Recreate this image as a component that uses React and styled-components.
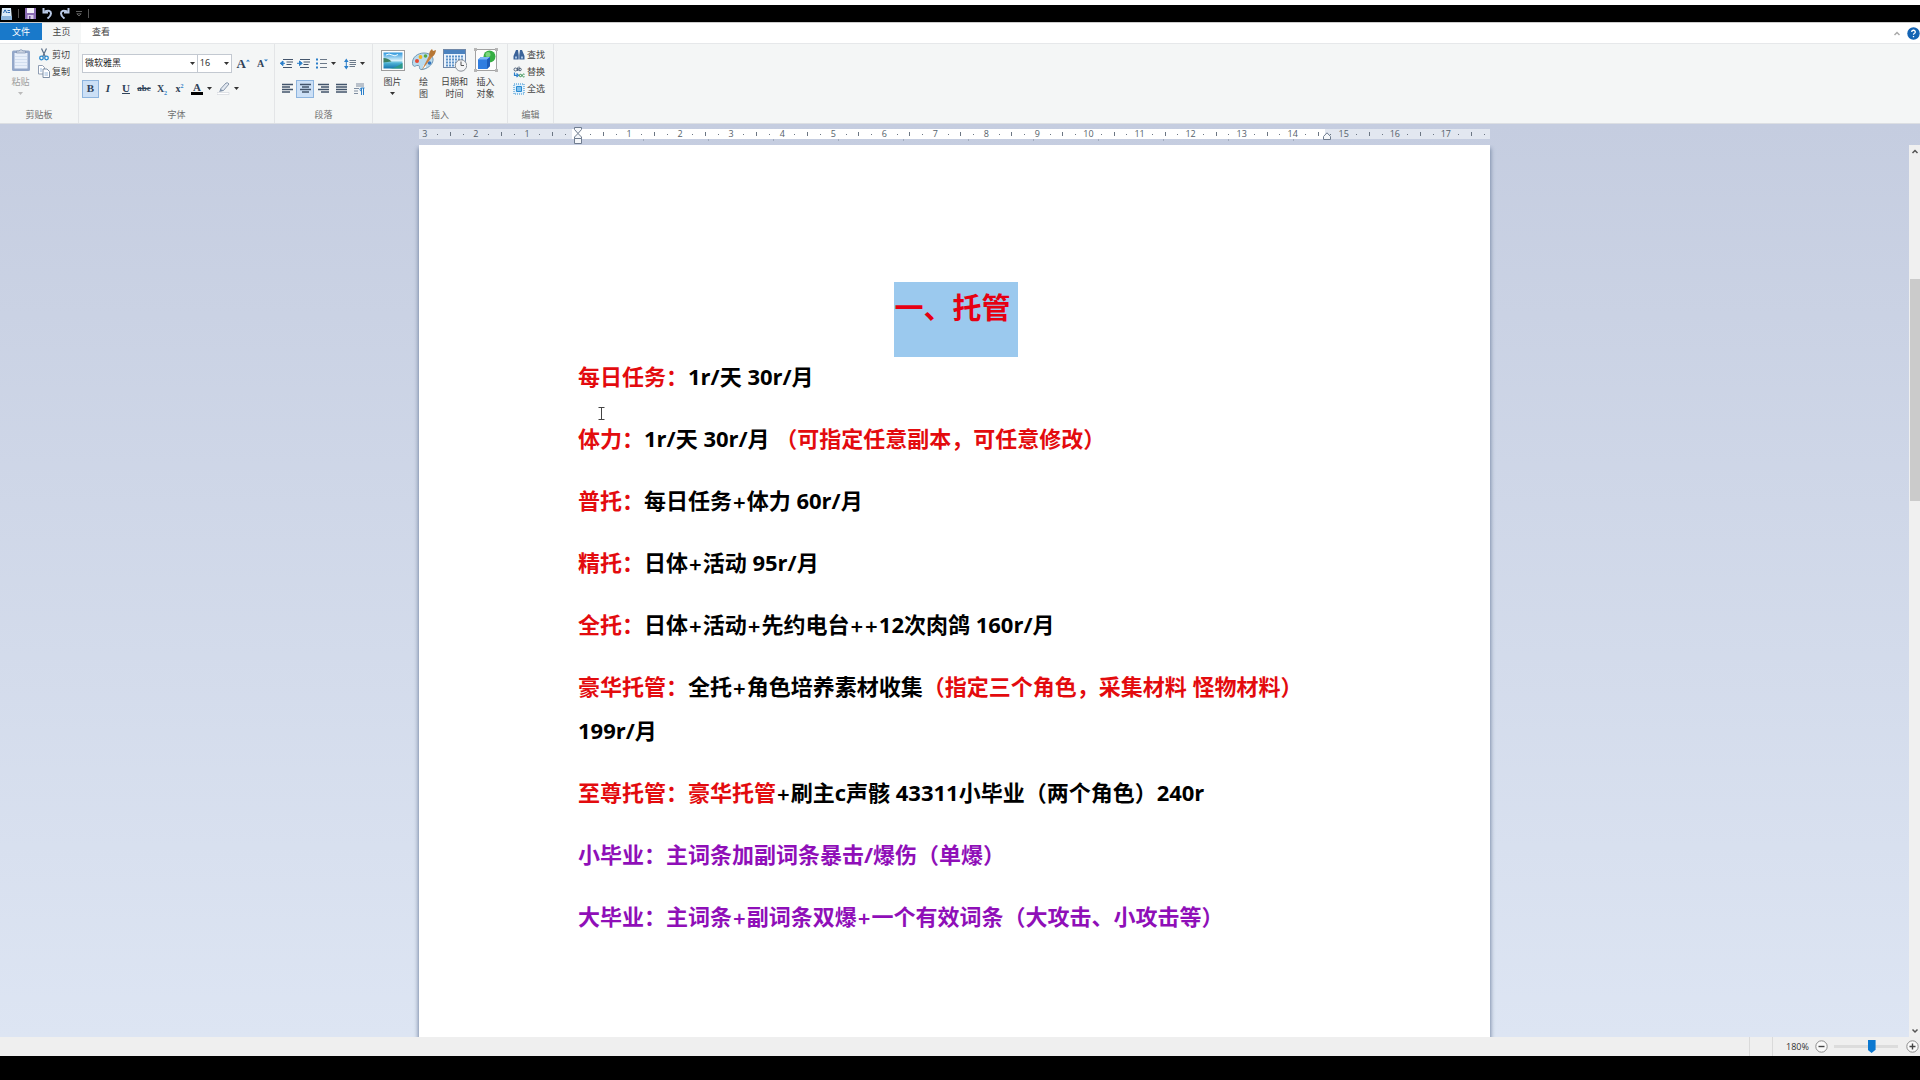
import React, { useState } from "react";
import styled, { createGlobalStyle } from "styled-components";

const GlobalStyle = createGlobalStyle`
  * {
    box-sizing: border-box;
  }

  body {
    margin: 0;
    background: #000;
    font-family: "Open Sans", "Noto Sans CJK SC", sans-serif;
    font-size: 9px;
    color: #444;
  }

  button, select, input {
    font: inherit;
    color: inherit;
    margin: 0;
  }
`;

// Window frame
const Window = styled.div`
  display: flex;
  flex-direction: column;
  height: 100vh;
  border-top: 5px solid #fff;
  padding-bottom: 24px;
  overflow: hidden;
`;

const TitleBar = styled.header`
  display: flex;
  align-items: center;
  gap: 6px;
  height: 17px;
  padding-left: 1px;
  background: #000;
`;

const TitleDivider = styled.span`
  width: 1px;
  height: 9px;
  background: #555;
`;

const IconButton = styled.button`
  display: flex;
  align-items: center;
  justify-content: center;
  padding: 0;
  border: none;
  background: none;
  width: ${(props) => props.$width || 11}px;
  height: 16px;
`;

const TabBar = styled.nav`
  display: flex;
  align-items: stretch;
  height: 21px;
  border-top: 1px solid #ccc;
  background: #fff;
`;

const Tab = styled.button`
  width: ${(props) => props.$width}px;
  height: ${(props) => (props.$file ? 17 : 20)}px;
  padding: 0 0 ${(props) => (props.$file ? 0 : 3)}px;
  border: none;
  background: ${(props) => (props.$file ? "#1979ca" : props.$active ? "#f4f6f6" : "none")};
  color: ${(props) => (props.$file ? "#fff" : "#444")};
  line-height: 17px;
`;

const TabTools = styled.div`
  display: flex;
  align-items: center;
  gap: 5px;
  margin-left: auto;
`;

// Ribbon
const Ribbon = styled.section`
  display: flex;
  height: 81px;
  border-top: 1px solid #e6e8ea;
  border-bottom: 1px solid #dcdfe3;
  background: #f4f6f6;
`;

const Group = styled.div`
  display: flex;
  flex-direction: column;
  width: ${(props) => props.$width}px;
  padding: 2px 3px 0;
  border-right: 1px solid #e3e5e7;
`;

const GroupBody = styled.div`
  display: flex;
  flex-direction: ${(props) => (props.$rows ? "column" : "row")};
  height: 62px;
  padding-left: ${(props) => props.$indent || 0}px;
`;

const GroupLabel = styled.div`
  line-height: 13px;
  text-align: center;
  color: #707070;
`;

const BigButton = styled.button`
  display: flex;
  flex-direction: column;
  align-items: center;
  width: ${(props) => props.$width || 31}px;
  padding: 2px 0 0;
  border: none;
  background: none;
  line-height: 12px;
  white-space: nowrap;
  color: ${(props) => (props.$faded ? "#a0a0a0" : "#444")};

  svg:first-child {
    margin-bottom: 4px;
  }

  svg:last-child {
    margin-top: 4px;
  }
`;

const SmallStack = styled.div`
  display: flex;
  flex-direction: column;
`;

const SmallButton = styled.button`
  display: flex;
  align-items: center;
  gap: 2px;
  height: 17px;
  padding: 0;
  border: none;
  background: none;
  color: #444;
`;

const ToolRow = styled.div`
  display: flex;
  align-items: center;
  height: 19px;
  margin-top: ${(props) => props.$top}px;
`;

const Tool = styled.button`
  display: flex;
  align-items: center;
  justify-content: center;
  gap: ${(props) => (props.$tight ? 0 : 4)}px;
  width: ${(props) => props.$width || 17}px;
  height: 18px;
  padding: 0;
  border: 1px solid ${(props) => (props.$on ? "#8db4de" : "transparent")};
  background: ${(props) => (props.$on ? "#cce0f6" : "none")};
`;

const SelectBox = styled.label`
  display: grid;
  align-items: center;
  width: ${(props) => props.$width}px;
  height: 19px;
  border: 1px solid #c3c9d1;
  background: #fff;

  & + & {
    border-left: none;
  }

  select, svg {
    grid-area: 1 / 1;
  }

  select {
    width: 100%;
    height: 17px;
    padding: 0 2px 2px;
    border: none;
    background: none;
    appearance: none;
    color: #222;
  }

  svg {
    justify-self: end;
    margin-right: 2px;
    pointer-events: none;
  }
`;

// Document area
const Workspace = styled.main`
  display: flex;
  flex-direction: column;
  flex: 1;
  min-height: 0;
  background: linear-gradient(#c5cde0, #dde5f3);
`;

const RulerArea = styled.div`
  height: 21px;
  padding: 5px 11px 0 0;
`;

const Ruler = styled.div`
  display: grid;
  grid-template-columns: repeat(84, minmax(0, 1fr));
  width: 1072px;
  max-width: 100%;
  height: 10px;
  margin: 0 auto;
`;

const RulerCell = styled.div`
  position: relative;
  display: flex;
  align-items: center;
  justify-content: center;
  background: ${(props) => (props.$outside ? "#e2e7f0" : "#fff")};
  color: #555f6b;
  line-height: 10px;
`;

const RulerMark = styled.i`
  width: 1px;
  height: ${(props) => (props.$tall ? 4 : 1)}px;
  background: #6c7683;
`;

const IndentMarker = styled.svg`
  position: absolute;
  top: ${(props) => props.$top}px;
  left: ${(props) => props.$left}px;
`;

const TabStops = styled.div`
  display: grid;
  grid-template-columns: repeat(11, 65px);
  width: 1072px;
  max-width: 100%;
  height: 2px;
  margin: 0 auto;
  padding-left: 160px;
  overflow: hidden;

  i {
    border-right: 1px solid #a3adbf;
  }
`;

const Scroller = styled.div`
  display: flex;
  flex: 1;
  min-height: 0;
`;

const Desk = styled.div`
  flex: 1;
  display: flex;
  justify-content: center;
  overflow: hidden;
`;

const Page = styled.article`
  position: relative;
  width: 1071px;
  max-width: 100%;
  padding: 137px 163px 0 159px;
  background: #fff;
  box-shadow: 0 4px 4px 1px #7d8ea9;
  font-size: 22px;
  font-weight: 700;
  line-height: 44px;
  color: #000;
`;

const Heading = styled.h1`
  height: 72px;
  margin: 0;
  font-size: 29px;
  text-align: center;
  color: #e60012;
`;

const Selection = styled.span`
  display: inline-block;
  height: 75px;
  padding-right: 7px;
  margin-right: -7px;
  background: #9bc9ee;
  line-height: 52px;
  vertical-align: top;
`;

const Paragraph = styled.p`
  margin: 0 0 18px;
`;

const Ink = styled.span`
  color: ${(props) => props.$color};
`;

const Plus = styled.span`
  font-family: Inter, sans-serif;
  font-weight: 500;
  line-height: 1;
`;

const Caret = styled.svg`
  position: absolute;
  top: 262px;
  left: 179px;
`;

const ScrollBar = styled.div`
  display: flex;
  flex-direction: column;
  align-items: center;
  width: 11px;
  background: #f0f0f0;
`;

const ScrollTrack = styled.div`
  display: grid;
  grid-template-rows: 122fr 222fr 524fr;
  flex: 1;
  width: 100%;
`;

const ScrollThumb = styled.div`
  grid-row: 2;
  margin-left: 1px;
  background: #cbcbcb;
`;

// Status bar
const StatusBar = styled.footer`
  display: flex;
  align-items: center;
  justify-content: flex-end;
  height: 19px;
  padding-right: 1px;
  background: #efefef;
`;

const StatusCell = styled.div`
  width: 23px;
  height: 100%;
  border-left: 1px solid #dadada;
`;

const ZoomLabel = styled.label`
  width: 38px;
  border-left: 1px solid #dadada;
  padding-left: 13px;
  line-height: 19px;
  color: #333;
`;

const ZoomButton = styled(IconButton)`
  width: 14px;
  margin-left: 4px;
`;

const ZoomSlider = styled.input`
  width: 64px;
  height: 14px;
  margin: 0 3px 0 6px;
  background: none;
  appearance: none;

  &::-webkit-slider-runnable-track {
    height: 3px;
    background: #dcdcdc;
  }

  &::-webkit-slider-thumb {
    appearance: none;
    width: 8px;
    height: 13px;
    margin-top: -5px;
    background: #0b78d0;
    clip-path: polygon(0 0, 100% 0, 100% 75%, 50% 100%, 0 75%);
  }
`;

const Arrow = ({ color = "#333" }) => (
  <svg width="5" height="3" viewBox="0 0 5 3" aria-hidden="true">
    <path d="M0 0h5L2.500 3z" fill={color} />
  </svg>
);

const AppIcon = () => (
  <svg width="11" height="12" viewBox="0 0 11 12">
    <path d="M1 0h9l1 12H0z" fill="#dcebf8" />
    <path d="M2.500 5l1.300-3h.6L5.600 5M6.500 2.500H9M6.500 4.500H9" stroke="#2c69b0" fill="none" />
    <path d="M0 8h11v4H0z" fill="#8fb6dc" />
  </svg>
);

const SaveIcon = () => (
  <svg width="11" height="11" viewBox="0 0 11 11">
    <path d="M0 0h11v11H0z" fill="#8a6bb3" />
    <path d="M2 0h7v5H2z" fill="#f4f1fa" />
    <path d="M2.500 7h6v4h-6z" fill="#d8cce8" />
    <path d="M4 8h1.500v3H4z" fill="#65458f" />
  </svg>
);

const UndoIcon = ({ flip }) => (
  <svg width="11" height="11" viewBox="0 0 11 11">
    <g transform={flip ? "matrix(-1 0 0 1 11 0)" : undefined} fill="none" stroke="#b9c9e6" strokeWidth="2">
      <path d="M2.500 3.500Q9 1.500 9 5.500 9 8 5.500 10.500" />
      <path d="M1.500 0v4.500H6" />
    </g>
  </svg>
);

const QuickMenuIcon = () => (
  <svg width="6" height="6" viewBox="0 0 6 6">
    <path d="M0 .5h6M.8 2.800h4.400L3 5z" stroke="#777" fill="none" strokeWidth=".8" />
  </svg>
);

const HelpIcon = () => (
  <svg width="13" height="13" viewBox="0 0 13 13">
    <circle cx="6.500" cy="6.500" r="6.200" fill="#1464b4" />
    <path d="M4.700 5a1.800 1.700 0 1 1 2.500 1.500q-.7.300-.7 1.300M6.500 8.900v1.400" stroke="#fff" strokeWidth="1.300" fill="none" />
  </svg>
);

const Chevron = ({ down, color = "#555" }) => (
  <svg width="8" height="12" viewBox="0 0 8 12">
    <path d={down ? "M1.500 4.500L4 7l2.500-2.500" : "M1.500 8L4 5.500 6.500 8"} stroke={color} strokeWidth="1.500" fill="none" />
  </svg>
);

const PasteIcon = () => (
  <svg width="20" height="24" viewBox="0 0 20 24">
    <rect x="1" y="2.500" width="18" height="20.500" rx="1.500" fill="#93a7c9" />
    <path d="M3.500 5h13v15.500h-13z" fill="#e8effa" />
    <path d="M4 8.500h12M4 11.500h12M4 14.500h12M4 17.500h12" stroke="#d2deef" />
    <path d="M5.500 5V3h2.700a1.900 1.900 0 0 1 3.600 0h2.700v2z" fill="#cdd5e2" stroke="#7f92b2" strokeWidth=".7" />
  </svg>
);

const CutIcon = () => (
  <svg width="12" height="13" viewBox="0 0 12 13">
    <path d="M3.500.500l4 8.500M8.500.500L4.500 9" stroke="#5a6f88" strokeWidth="1.200" />
    <circle cx="3.500" cy="10" r="1.800" fill="none" stroke="#2989cf" strokeWidth="1.300" />
    <circle cx="8.500" cy="10" r="1.800" fill="none" stroke="#2989cf" strokeWidth="1.300" />
  </svg>
);

const CopyIcon = () => (
  <svg width="12" height="13" viewBox="0 0 12 13">
    <path d="M.5.500h4l2 2v6.500h-6z" fill="#fff" stroke="#8494ab" strokeWidth=".9" />
    <path d="M5 4h4l2.500 2.500v6H5z" fill="#fff" stroke="#71839c" strokeWidth=".9" />
    <path d="M6.500 8h3.500M6.500 10h3.500M2 4h2M2 6h2" stroke="#7da4cf" strokeWidth=".8" />
  </svg>
);

const Letter = styled.span`
  font-family: "Liberation Serif", serif;
  font-size: ${(props) => props.$size || 11}px;
  line-height: 13px;
  font-weight: 700;
  font-style: ${(props) => (props.$italic ? "italic" : "normal")};
  text-decoration: ${(props) => props.$line || "none"};
  color: #2f4258;

  sub, sup {
    font-size: 6px;
    line-height: 0;
    color: #2f7fc6;
  }
`;

const FontColor = styled(Letter)`
  width: 12px;
  border-bottom: 3px solid #000;
  line-height: 10px;
  text-align: center;
`;

const SizeIcon = ({ grow }) => (
  <>
    <Letter $size={grow ? 13 : 10}>A</Letter>
    <svg width="4" height="9" viewBox="0 0 4 9">
      <path d={grow ? "M0 2.500L2 .500l2 2z" : "M0 .500h4l-2 2z"} fill="#2f7fc6" />
    </svg>
  </>
);

const PenIcon = () => (
  <svg width="13" height="13" viewBox="0 0 13 13">
    <path d="M3.500 7L9 1q2-.8 3 1L6.500 8.500l-3 .5z" fill="#e2e8f0" stroke="#7c8ca1" strokeWidth=".9" />
    <path d="M3.500 7l-1.500 3 4.500-1.500" fill="#8496ae" />
    <path d="M0 10.500h12v2H0z" fill="#fff" stroke="#c5cbd3" strokeWidth=".5" />
  </svg>
);

const IndentIcon = ({ right }) => (
  <svg width="13" height="11" viewBox="0 0 13 11">
    <path d="M3 1.500h10M6.500 4h6.500M6.500 6.500h5M3 9.500h9" stroke="#44566d" strokeWidth="1.200" />
    <path d={right ? "M0 5.300h3M2.500 3l2.800 2.300-2.800 2.300z" : "M5 5.300H2.500M3 3L.2 5.300 3 7.600z"} fill="#2a7fca" stroke="#2a7fca" />
  </svg>
);

const BulletsIcon = () => (
  <svg width="11" height="11" viewBox="0 0 11 11">
    <path d="M0 1.500h2M0 5.500h2M0 9.500h2" stroke="#2a7fca" strokeWidth="2" />
    <path d="M4 1.500h7M4 5.500h7M4 9.500h7" stroke="#6b7989" strokeWidth="1.100" />
  </svg>
);

const SpacingIcon = () => (
  <svg width="12" height="12" viewBox="0 0 12 12">
    <path d="M2.300 2v8" stroke="#2a7fca" />
    <path d="M0 4l2.300-3.500L4.600 4zM0 8l2.300 3.500L4.600 8z" fill="#2a7fca" />
    <path d="M5.500 2.500H12M5.500 4.500H12M5.500 6.500H12M5.500 8.500H11" stroke="#6b7989" />
  </svg>
);

const alignPaths = {
  left: "M0 1.500h11M0 4h8M0 6.500h11M0 9h8",
  center: "M0 1.500h11M2 4h7M0 6.500h11M2 9h7",
  right: "M0 1.500h11M3 4h8M0 6.500h11M3 9h8",
  justify: "M0 1.500h11M0 4h11M0 6.500h11M0 9h11",
};

const AlignIcon = ({ kind }) => (
  <svg width="11" height="11" viewBox="0 0 11 11">
    <path d={alignPaths[kind]} stroke="#42546b" strokeWidth="1.500" />
  </svg>
);

const ParagraphIcon = () => (
  <svg width="12" height="12" viewBox="0 0 12 12">
    <path d="M3 1h8M3 3h8M1 5.500h5M1 8h4M1 10.500h4" stroke="#7e8da0" />
    <path d="M11.500 5H8.500a1.500 1.500 0 0 0 0 3M8.500 5v7M10.500 5v7" stroke="#2a7fca" fill="none" />
  </svg>
);

const PictureIcon = () => (
  <svg width="24" height="24" viewBox="0 0 24 24">
    <defs>
      <linearGradient id="sky" x1="0" y1="0" x2="0" y2="1">
        <stop offset="0" stopColor="#2b95dc" />
        <stop offset=".5" stopColor="#d8f1fa" />
        <stop offset=".65" stopColor="#4fb4d6" />
        <stop offset="1" stopColor="#1674ae" />
      </linearGradient>
    </defs>
    <rect x=".5" y="2.500" width="23" height="20" fill="#fdfdfd" stroke="#9c9c9c" />
    <path d="M2.500 4.500h19v16h-19z" fill="url(#sky)" />
    <path d="M2.500 10q5 0 8 3.500l-8 1z" fill="#3c8062" />
    <path d="M21.500 15v5.500h-13q6-.5 13-5.500z" fill="#2e9a86" />
    <path d="M5 7q3-2 6 0t6-.5" stroke="#eefaff" fill="none" />
  </svg>
);

const PaletteIcon = () => (
  <svg width="24" height="24" viewBox="0 0 24 24">
    <path d="M.5 15.500C0 9 6 5 12 5s9.500 3.500 9 7.500-5.500 8.500-11 9c-3 .3-2.500-2-2.500-3S5 17 3.500 18s-2.800-.5-3-2.500z" fill="#b9dbee" stroke="#7398b3" />
    <circle cx="5" cy="13" r="2" fill="#e44b34" />
    <circle cx="8.500" cy="9" r="1.900" fill="#f3b21f" />
    <circle cx="13.500" cy="8" r="1.800" fill="#57a942" />
    <circle cx="17.500" cy="15" r="1.800" fill="#3475c0" />
    <circle cx="12.500" cy="18.500" r="1.500" fill="#fff" />
    <path d="M9.500 22.500L17.500 7l3 1.500z" fill="#c88243" />
    <path d="M17 7.500q0-4.500 3-6.500l1 2 3-1q-.5 5-4 7z" fill="#b67735" />
  </svg>
);

const DateIcon = () => (
  <svg width="24" height="24" viewBox="0 0 24 24">
    <rect x=".5" y="1.500" width="22" height="18" fill="#eaf3fc" stroke="#7088a8" />
    <path d="M1 2h21v4H1z" fill="#4a82bf" />
    <path d="M3 8.500h17M3 11.500h17M3 14.500h12M3 17.500h10" stroke="#5d93c9" strokeWidth="2" strokeDasharray="2 1" />
    <circle cx="18" cy="17.500" r="5.700" fill="#f3f4f5" stroke="#8a9199" />
    <path d="M18 13.500v4h3" stroke="#555" fill="none" />
  </svg>
);

const ObjectIcon = () => (
  <svg width="24" height="24" viewBox="0 0 24 24">
    <path d="M1.500 1.500h21v21h-21z" fill="#fdfdfd" stroke="#8b8b8b" strokeWidth=".8" />
    <circle cx="15.500" cy="8.500" r="6" fill="#35ae43" />
    <circle cx="14" cy="6.500" r="2.500" fill="#7ad67e" />
    <path d="M4 11.500l3-2.500h9v9l-3 3H4z" fill="#2f7de0" />
    <path d="M4 11.500l3-2.500h9l-3 2.500z" fill="#7cb5f6" />
    <path d="M13 11.500L16 9v9l-3 3z" fill="#1c5cb8" />
    <path d="M0 0h3v3H0zM21 0h3v3h-3zM0 21h3v3H0zM21 21h3v3h-3z" fill="#b5b5b5" />
  </svg>
);

const FindIcon = () => (
  <svg width="12" height="12" viewBox="0 0 12 12">
    <path d="M3 1h2l.7 5v4.500H.5V7zM9 1H7l-.7 5v4.500h5.200V7z" fill="#3b6399" />
    <path d="M2 7.500h2v2H2zM8 7.500h2v2H8z" fill="#a9c5e6" />
  </svg>
);

const ReplaceIcon = () => (
  <svg width="12" height="12" viewBox="0 0 12 12">
    <circle cx="2.500" cy="3.500" r="1.500" fill="none" stroke="#52647b" />
    <path d="M4.500 1.500V5M6 .500V5" stroke="#52647b" />
    <circle cx="7" cy="3.500" r="1.300" fill="none" stroke="#52647b" />
    <path d="M1.500 6.500v2.800h3M3.500 7.500l2 1.800-2 1.700" stroke="#2a7fca" fill="none" strokeWidth="1.200" />
    <circle cx="7.500" cy="9.500" r="1.200" fill="none" stroke="#2f8f4b" />
    <path d="M11.500 8.300a1.400 1.400 0 1 0 0 2.400" fill="none" stroke="#2f8f4b" />
  </svg>
);

const SelectAllIcon = () => (
  <svg width="12" height="12" viewBox="0 0 12 12">
    <path d="M1 1h10v10H1z" fill="#e2f1fc" stroke="#2a8bcf" strokeDasharray="1 1" />
    <path d="M3.500 3.500h5v5h-5z" fill="#7fc0ee" stroke="#2a8bcf" />
  </svg>
);

const ZoomIcon = ({ plus }) => (
  <svg width="13" height="13" viewBox="0 0 13 13">
    <circle cx="6.500" cy="6.500" r="5.700" fill="#fafafa" stroke="#8d8d8d" />
    <path d={plus ? "M3.500 6.500h6M6.500 3.500v6" : "M3.500 6.500h6"} stroke="#444" strokeWidth="1.400" />
  </svg>
);

const RED = "#e30b0e";
const PURPLE = "#8f0fb8";

const paragraphs = [
  [["每日任务：", RED], ["1r/天 30r/月"]],
  [["体力：", RED], ["1r/天 30r/月 "], ["（可指定任意副本，可任意修改）", RED]],
  [["普托：", RED], ["每日任务+体力 60r/月"]],
  [["精托：", RED], ["日体+活动 95r/月"]],
  [["全托：", RED], ["日体+活动+先约电台++12次肉鸽 160r/月"]],
  [["豪华托管：", RED], ["全托+角色培养素材收集"], ["（指定三个角色，采集材料 怪物材料）", RED], ["199r/月"]],
  [["至尊托管：豪华托管", RED], ["+刷主c声骸 43311小毕业（两个角色）240r"]],
  [["小毕业：主词条加副词条暴击/爆伤（单爆）", PURPLE]],
  [["大毕业：主词条+副词条双爆+一个有效词条（大攻击、小攻击等）", PURPLE]],
];

const Run = ({ text, color = "#000" }) => (
  <Ink $color={color}>
    {text.split(/(\++)/).map((part, i) => (part[0] === "+" ? <Plus key={i}>{part}</Plus> : part))}
  </Ink>
);

const RulerScale = () => (
  <Ruler>
    {Array.from({ length: 84 }, (_, i) => {
      const step = i % 4;
      const value = Math.abs(i / 4 - 3);
      return (
        <RulerCell key={i} $outside={i < 12 || i > 70}>
          {step === 0 && value !== 0 && value}
          {step !== 0 && <RulerMark $tall={step === 2} />}
          {i === 12 && (
            <IndentMarker $top={-2} $left={2} width="8" height="18" viewBox="0 0 8 18">
              <path d="M.5.500h7v2L4 6.500.5 2.500zM4 6.500L7.500 10v1.500h-7V10zM.5 11.500h7v5h-7z" fill="#f5f7fa" stroke="#6f7c8f" />
            </IndentMarker>
          )}
          {i === 71 && (
            <IndentMarker $top={3} $left={-2} width="8" height="8" viewBox="0 0 8 8">
              <path d="M4 .8L7.500 4.500v3h-7v-3z" fill="#f5f7fa" stroke="#6f7c8f" />
            </IndentMarker>
          )}
        </RulerCell>
      );
    })}
  </Ruler>
);

export default function App() {
  const [zoom, setZoom] = useState(180);
  const [align, setAlign] = useState("center");
  const [bold, setBold] = useState(true);

  return (
    <>
      <GlobalStyle />
      <Window>
        <TitleBar>
          <AppIcon />
          <TitleDivider />
          <IconButton aria-label="保存"><SaveIcon /></IconButton>
          <IconButton aria-label="撤消"><UndoIcon /></IconButton>
          <IconButton aria-label="重做"><UndoIcon flip /></IconButton>
          <IconButton $width={6} aria-label="自定义快速访问工具栏"><QuickMenuIcon /></IconButton>
          <TitleDivider />
        </TitleBar>
        <TabBar>
          <Tab $file $width={42}>文件</Tab>
          <Tab $active $width={39}>主页</Tab>
          <Tab $width={40}>查看</Tab>
          <TabTools>
            <IconButton aria-label="最小化功能区"><Chevron color="#aaa" /></IconButton>
            <IconButton $width={13} aria-label="帮助"><HelpIcon /></IconButton>
          </TabTools>
        </TabBar>

        <Ribbon>
          <Group $width={79}>
            <GroupBody>
              <BigButton $width={35} $faded>
                <PasteIcon />
                粘贴
                <Arrow color="#bbb" />
              </BigButton>
              <SmallStack>
                <SmallButton><CutIcon />剪切</SmallButton>
                <SmallButton><CopyIcon />复制</SmallButton>
              </SmallStack>
            </GroupBody>
            <GroupLabel>剪贴板</GroupLabel>
          </Group>

          <Group $width={196}>
            <GroupBody $rows>
              <ToolRow $top={8}>
                <SelectBox $width={117}>
                  <select aria-label="字体" defaultValue="微软雅黑">
                    <option>微软雅黑</option>
                  </select>
                  <Arrow />
                </SelectBox>
                <SelectBox $width={35}>
                  <select aria-label="字号" defaultValue="16">
                    <option>16</option>
                  </select>
                  <Arrow />
                </SelectBox>
                <Tool $width={22} $tight aria-label="增大字号"><SizeIcon grow /></Tool>
                <Tool $tight aria-label="减小字号"><SizeIcon /></Tool>
              </ToolRow>
              <ToolRow $top={6}>
                <Tool $on={bold} onClick={() => setBold(!bold)}><Letter>B</Letter></Tool>
                <Tool $width={18}><Letter $italic>I</Letter></Tool>
                <Tool $width={18}><Letter $line="underline">U</Letter></Tool>
                <Tool $width={18}><Letter $size={9} $line="line-through">abc</Letter></Tool>
                <Tool $width={18}><Letter $size={10}>X<sub>2</sub></Letter></Tool>
                <Tool><Letter $size={10}>x<sup>2</sup></Letter></Tool>
                <Tool $width={27}><FontColor>A</FontColor><Arrow /></Tool>
                <Tool $width={25} aria-label="文本突出显示颜色"><PenIcon /><Arrow /></Tool>
              </ToolRow>
            </GroupBody>
            <GroupLabel>字体</GroupLabel>
          </Group>

          <Group $width={98}>
            <GroupBody $rows>
              <ToolRow $top={8}>
                <Tool aria-label="减少缩进"><IndentIcon /></Tool>
                <Tool aria-label="增加缩进"><IndentIcon right /></Tool>
                <Tool $width={28} aria-label="项目符号"><BulletsIcon /><Arrow /></Tool>
                <Tool $width={28} aria-label="行距"><SpacingIcon /><Arrow /></Tool>
              </ToolRow>
              <ToolRow $top={6}>
                {Object.keys(alignPaths).map((kind) => (
                  <Tool key={kind} $width={18} $on={align === kind} aria-label={kind} onClick={() => setAlign(kind)}>
                    <AlignIcon kind={kind} />
                  </Tool>
                ))}
                <Tool $width={18} aria-label="段落"><ParagraphIcon /></Tool>
              </ToolRow>
            </GroupBody>
            <GroupLabel>段落</GroupLabel>
          </Group>

          <Group $width={135}>
            <GroupBody $indent={1}>
              <BigButton>
                <PictureIcon />
                图片
                <Arrow />
              </BigButton>
              <BigButton><PaletteIcon />绘<br />图</BigButton>
              <BigButton><DateIcon />日期和<br />时间</BigButton>
              <BigButton><ObjectIcon />插入<br />对象</BigButton>
            </GroupBody>
            <GroupLabel>插入</GroupLabel>
          </Group>

          <Group $width={46}>
            <GroupBody $indent={2}>
              <SmallStack>
                <SmallButton><FindIcon />查找</SmallButton>
                <SmallButton><ReplaceIcon />替换</SmallButton>
                <SmallButton><SelectAllIcon />全选</SmallButton>
              </SmallStack>
            </GroupBody>
            <GroupLabel>编辑</GroupLabel>
          </Group>
        </Ribbon>

        <Workspace>
          <RulerArea>
            <RulerScale />
            <TabStops>
              {Array.from({ length: 11 }, (_, i) => <i key={i} />)}
            </TabStops>
          </RulerArea>
          <Scroller>
            <Desk>
              <Page>
                <Heading><Selection>一、托管</Selection></Heading>
                {paragraphs.map((runs, index) => (
                  <Paragraph key={index}>
                    {runs.map(([text, color], i) => (
                      <Run key={i} text={text} color={color} />
                    ))}
                  </Paragraph>
                ))}
                <Caret width="7" height="13" viewBox="0 0 7 13">
                  <path d="M.5.500h6M.5 12.500h6M3.500.500v12" stroke="#444" fill="none" />
                </Caret>
              </Page>
            </Desk>
            <ScrollBar>
              <Chevron />
              <ScrollTrack><ScrollThumb /></ScrollTrack>
              <Chevron down />
            </ScrollBar>
          </Scroller>
        </Workspace>

        <StatusBar>
          <StatusCell />
          <ZoomLabel htmlFor="zoom">{zoom}%</ZoomLabel>
          <ZoomButton aria-label="缩小" onClick={() => setZoom(Math.max(zoom - 10, 60))}><ZoomIcon /></ZoomButton>
          <ZoomSlider
            id="zoom"
            type="range"
            min="60"
            max="260"
            value={zoom}
            onChange={(e) => setZoom(Number(e.target.value))}
          />
          <ZoomButton aria-label="放大" onClick={() => setZoom(Math.min(zoom + 10, 260))}><ZoomIcon plus /></ZoomButton>
        </StatusBar>
      </Window>
    </>
  );
}
